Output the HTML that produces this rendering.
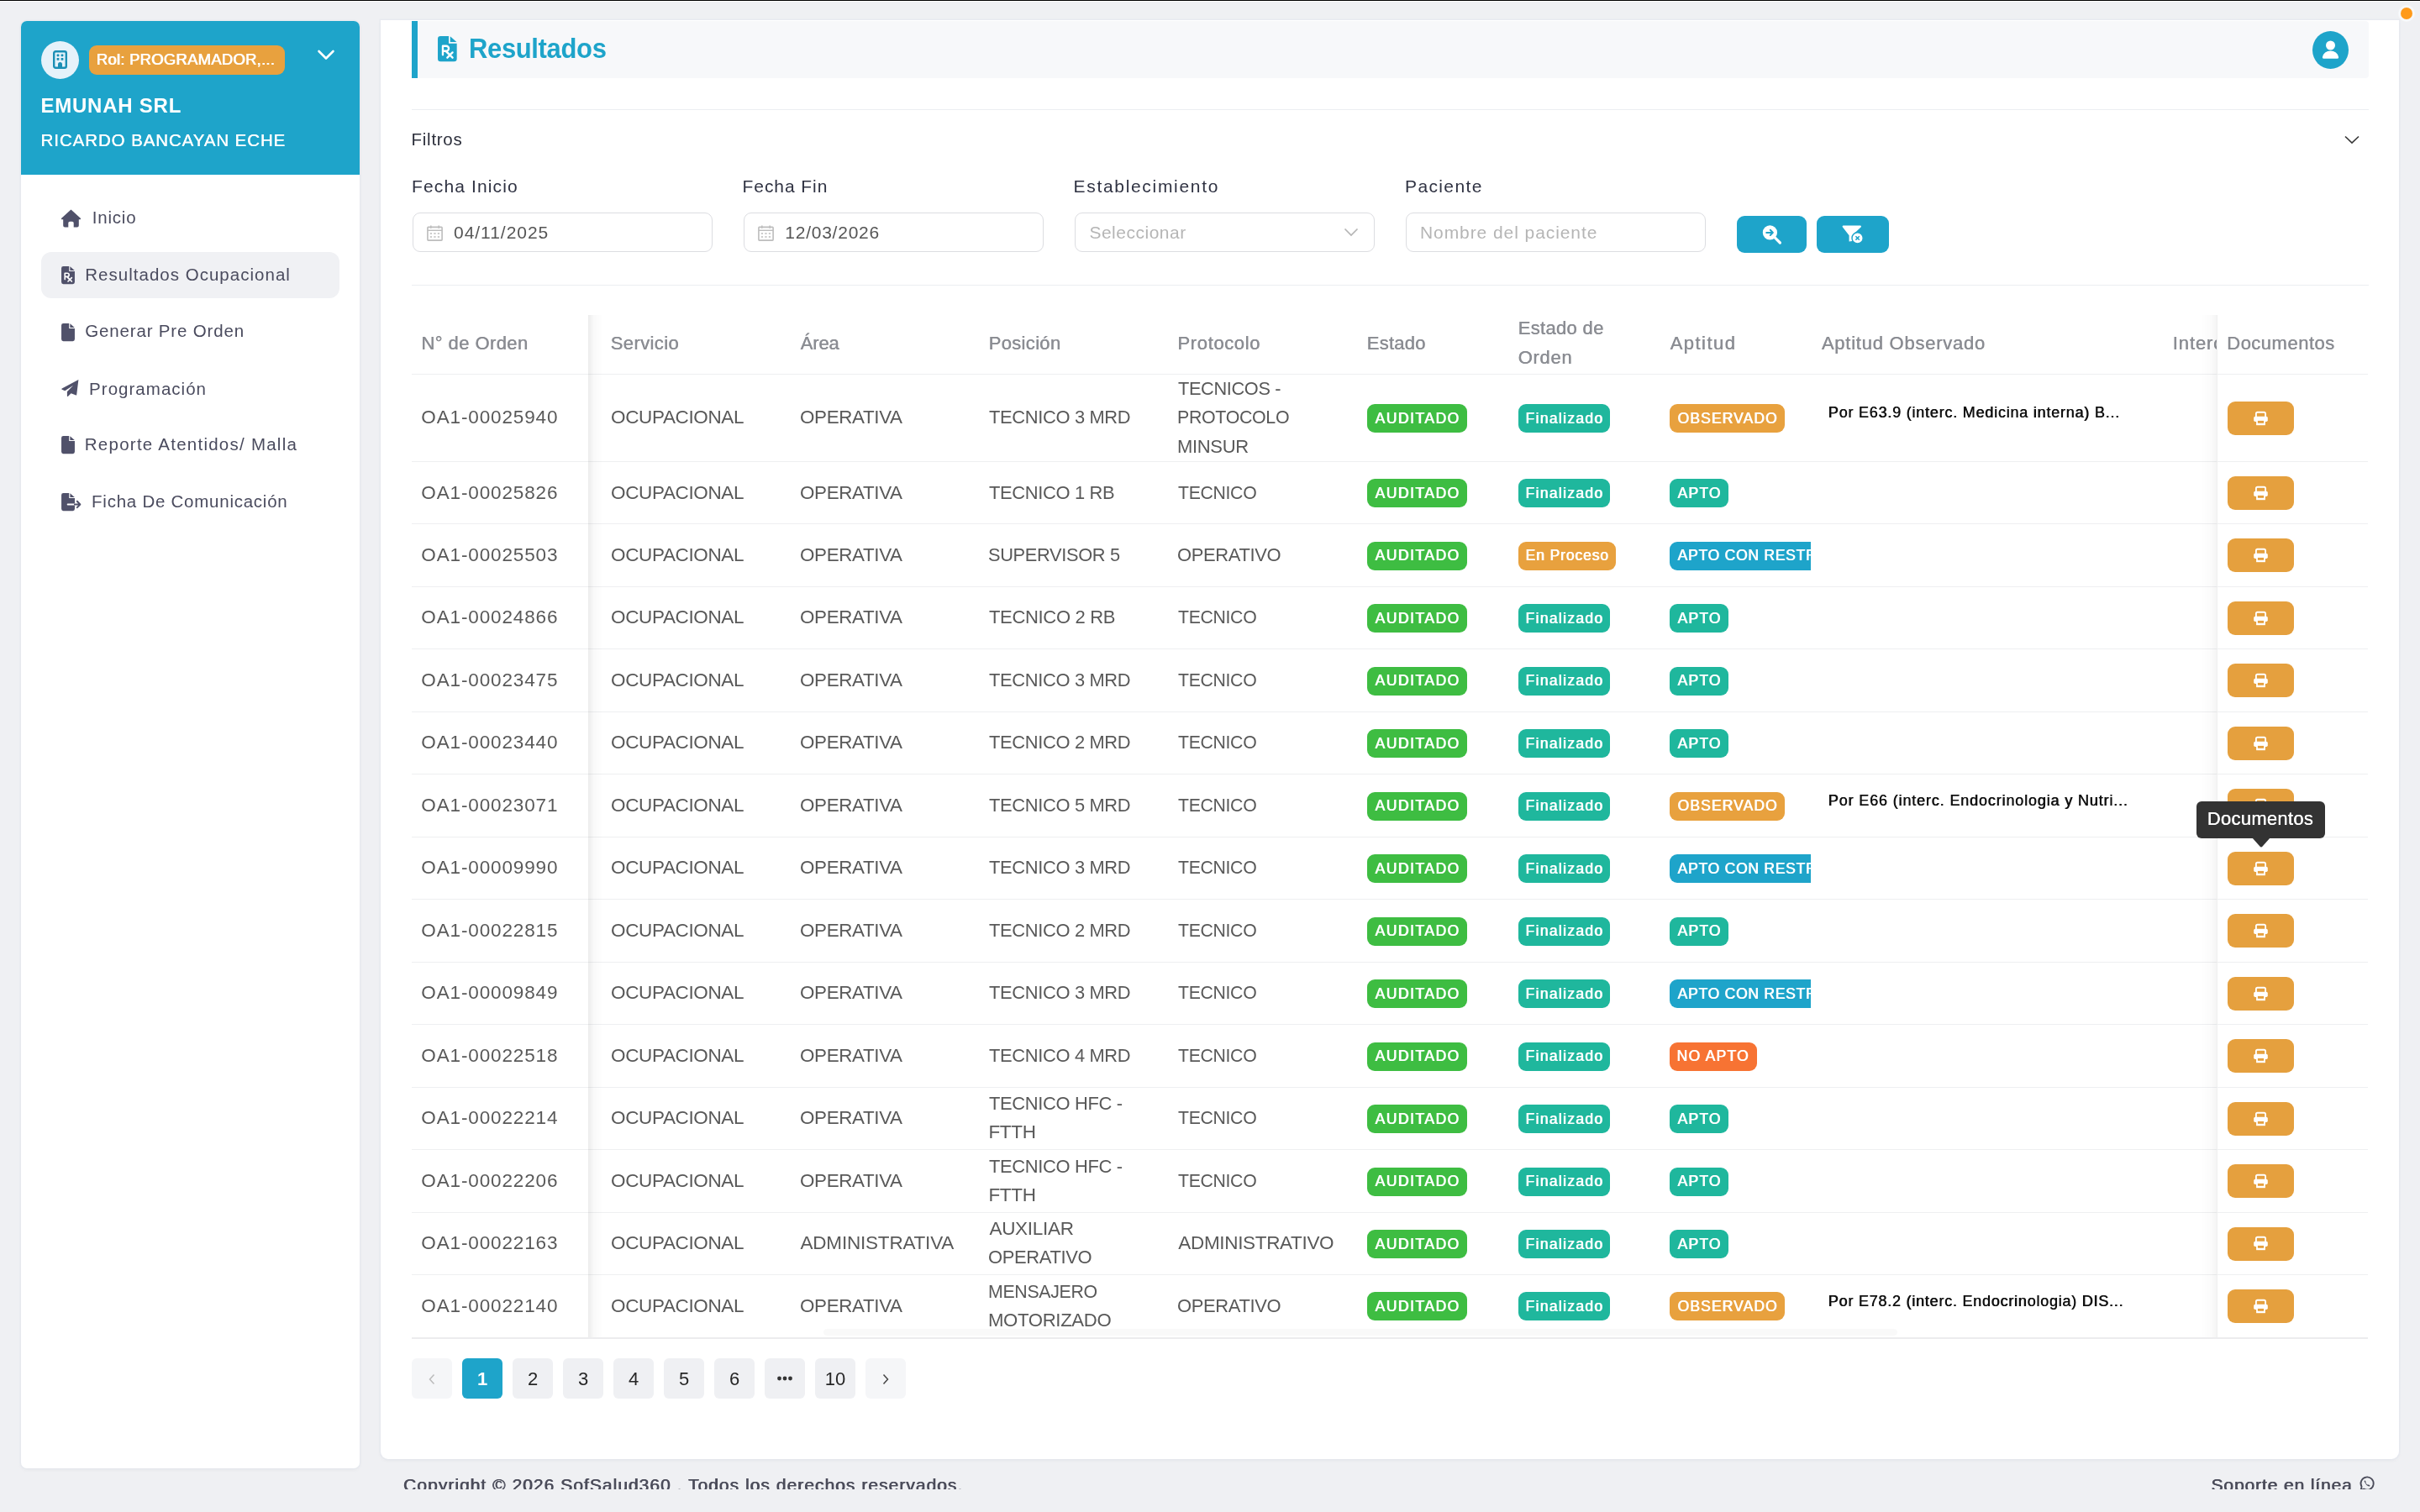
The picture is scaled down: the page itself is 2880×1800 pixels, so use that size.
<!DOCTYPE html><html><head><meta charset="utf-8"><style>
html,body{margin:0;padding:0;width:2880px;height:1800px;overflow:hidden;background:#eff0f3;font-family:"Liberation Sans", sans-serif;}
.t{position:absolute;white-space:nowrap;}
.r{position:absolute;}
svg{position:absolute;overflow:visible;}

</style></head><body><div style="position:absolute;left:0;top:0;width:2880px;height:1800px;overflow:hidden;will-change:transform">
<div class="r" style="left:0px;top:0px;width:2880px;height:1px;background:#000;"></div>
<div class="r" style="left:0px;top:1px;width:2880px;height:1px;background:#fbfbfb;"></div>
<div class="r" style="left:25px;top:25px;width:403px;height:1723px;background:#fff;border-radius:7px;box-shadow:0 0 0 1.5px rgba(225,230,236,0.55),0 2px 5px rgba(30,40,60,0.04);"></div>
<div class="r" style="left:25px;top:25px;width:403px;height:183px;background:#1ea4ca;border-radius:7px 7px 0 0;"></div>
<div class="r" style="left:49px;top:49px;width:45px;height:45px;background:#e5f2fa;border-radius:50%;"></div>
<svg style="left:63px;top:60px" width="17" height="22" viewBox="0 0 17 22"><rect x="1.2" y="1.2" width="14.6" height="19.6" rx="2" fill="none" stroke="#1b8fb5" stroke-width="2.4"/><rect x="4.6" y="4.4" width="2.8" height="2.8" rx="0.6" fill="#1b8fb5"/><rect x="9.6" y="4.4" width="2.8" height="2.8" rx="0.6" fill="#1b8fb5"/><rect x="4.6" y="9" width="2.8" height="2.8" rx="0.6" fill="#1b8fb5"/><rect x="9.6" y="9" width="2.8" height="2.8" rx="0.6" fill="#1b8fb5"/><path d="M6 21 V16.6 a2.5 2.5 0 0 1 5 0 V21 Z" fill="#1b8fb5"/></svg>
<div class="r" style="left:106px;top:54px;width:233px;height:35px;background:#e8a13e;border-radius:9px;"></div>
<div class="t" style="left:114.50px;top:61.57px;font-size:18.5px;line-height:18.5px;color:#fff;text-shadow:0.8px 0 0 #fff;letter-spacing:0.232px;">Rol: PROGRAMADOR,...</div>
<svg style="left:376px;top:57px" width="24" height="18" viewBox="0 0 24 18"><path d="M3.5 4 L12 12.5 L20.5 4" fill="none" stroke="#fff" stroke-width="2.6" stroke-linecap="round" stroke-linejoin="round"/></svg>
<div class="t" style="left:48.50px;top:113.80px;font-size:24px;line-height:24px;color:#fff;font-weight:700;letter-spacing:0.763px;">EMUNAH SRL</div>
<div class="t" style="left:48.50px;top:157.07px;font-size:20.5px;line-height:20.5px;color:#fff;text-shadow:0.35px 0 0 #fff;letter-spacing:0.903px;">RICARDO BANCAYAN ECHE</div>
<div class="r" style="left:49px;top:300px;width:355px;height:55px;background:#f0f1f4;border-radius:12px;"></div>
<svg style="left:72px;top:249px" width="25" height="22" viewBox="0 0 25 22"><path d="M12.5 0.6 L23.8 10.7 a0.9 0.9 0 0 1 -0.6 1.5 H21.8 V19.5 a2 2 0 0 1 -2 2 H15.7 V16.6 a1.8 1.8 0 0 0 -1.8 -1.8 H11.1 a1.8 1.8 0 0 0 -1.8 1.8 V21.5 H5.2 a2 2 0 0 1 -2 -2 V12.2 H1.8 a0.9 0.9 0 0 1 -0.6 -1.5 Z" fill="#50516a"/></svg>
<div class="t" style="left:109.70px;top:249.07px;font-size:20.5px;line-height:20.5px;color:#4a4b5e;letter-spacing:0.809px;">Inicio</div>
<svg style="left:73px;top:316.5px" width="16" height="21.2" viewBox="0 0 24 32"><path d="M0 3.5 A3.5 3.5 0 0 1 3.5 0 H13.8 V9.2 H24 V28.5 A3.5 3.5 0 0 1 20.5 32 H3.5 A3.5 3.5 0 0 1 0 28.5 Z" fill="#50516a"/><path d="M15.6 0.3 L23.7 7.4 H15.6 Z" fill="#50516a"/><path d="M6.3 23.5 V12.4 H10.6 A3.2 3.2 0 0 1 10.6 18.8 H6.3 M9.8 18.8 L13.6 22.4 M12 20.6 L18.6 27.2 M18.6 20.6 L12 27.2" fill="none" stroke="#fff" stroke-width="2.5" stroke-linecap="round" stroke-linejoin="round"/></svg>
<div class="t" style="left:101.30px;top:316.97px;font-size:20.5px;line-height:20.5px;color:#4a4b5e;letter-spacing:1.016px;">Resultados Ocupacional</div>
<svg style="left:73px;top:384.5px" width="16" height="21.2" viewBox="0 0 24 32"><path d="M0 3.5 A3.5 3.5 0 0 1 3.5 0 H13.8 V9.2 H24 V28.5 A3.5 3.5 0 0 1 20.5 32 H3.5 A3.5 3.5 0 0 1 0 28.5 Z" fill="#50516a"/><path d="M15.6 0.3 L23.7 7.4 H15.6 Z" fill="#50516a"/></svg>
<div class="t" style="left:101.30px;top:384.18px;font-size:20.5px;line-height:20.5px;color:#4a4b5e;letter-spacing:0.833px;">Generar Pre Orden</div>
<svg style="left:73px;top:451px" width="22" height="22" viewBox="0 0 22 22"><path d="M20.4 1.1 L0.7 11.6 a0.6 0.6 0 0 0 0 1.1 L4.3 14.3 L14.2 7.7 L6.9 15.2 V20.6 a0.5 0.5 0 0 0 0.9 0.3 L11.6 17.2 L17.4 19.4 a0.6 0.6 0 0 0 0.8 -0.5 Z" fill="#50516a"/></svg>
<div class="t" style="left:106.10px;top:452.77px;font-size:20.5px;line-height:20.5px;color:#4a4b5e;letter-spacing:1.026px;">Programación</div>
<svg style="left:73px;top:519.4px" width="16" height="21.2" viewBox="0 0 24 32"><path d="M0 3.5 A3.5 3.5 0 0 1 3.5 0 H13.8 V9.2 H24 V28.5 A3.5 3.5 0 0 1 20.5 32 H3.5 A3.5 3.5 0 0 1 0 28.5 Z" fill="#50516a"/><path d="M15.6 0.3 L23.7 7.4 H15.6 Z" fill="#50516a"/></svg>
<div class="t" style="left:100.80px;top:519.18px;font-size:20.5px;line-height:20.5px;color:#4a4b5e;letter-spacing:1.249px;">Reporte Atentidos/ Malla</div>
<svg style="left:73px;top:586.5px" width="24" height="21.2" viewBox="0 0 36 32"><path d="M0 3.5 A3.5 3.5 0 0 1 3.5 0 H13.8 V9.2 H24 V18.8 H11.5 A1.5 1.5 0 0 0 11.5 21.8 H24 V28.5 A3.5 3.5 0 0 1 20.5 32 H3.5 A3.5 3.5 0 0 1 0 28.5 Z" fill="#50516a"/><path d="M15.6 0.3 L23.7 7.4 H15.6 Z" fill="#50516a"/><path d="M24 20.3 H33 M28.3 14.8 L33.6 20.3 L28.3 25.8" fill="none" stroke="#50516a" stroke-width="3" stroke-linecap="round" stroke-linejoin="round"/></svg>
<div class="t" style="left:109.10px;top:586.68px;font-size:20.5px;line-height:20.5px;color:#4a4b5e;letter-spacing:0.749px;">Ficha De Comunicación</div>
<div class="r" style="left:453px;top:24px;width:2402px;height:1713px;background:#fff;border-radius:0 0 9px 9px;box-shadow:0 0 0 1.5px rgba(225,230,236,0.55),0 2px 5px rgba(30,40,60,0.04);"></div>
<div class="r" style="left:497px;top:25px;width:2322px;height:68px;background:#f7f8fa;border-radius:0 4px 4px 0;"></div>
<div class="r" style="left:490px;top:25px;width:7px;height:68px;background:#1ea4ca;"></div>
<svg style="left:521px;top:42.8px" width="22.7" height="30.2" viewBox="0 0 24 32"><path d="M0 3.5 A3.5 3.5 0 0 1 3.5 0 H13.8 V9.2 H24 V28.5 A3.5 3.5 0 0 1 20.5 32 H3.5 A3.5 3.5 0 0 1 0 28.5 Z" fill="#1ea4ca"/><path d="M15.6 0.3 L23.7 7.4 H15.6 Z" fill="#1ea4ca"/><path d="M6.3 23.5 V12.4 H10.6 A3.2 3.2 0 0 1 10.6 18.8 H6.3 M9.8 18.8 L13.6 22.4 M12 20.6 L18.6 27.2 M18.6 20.6 L12 27.2" fill="none" stroke="#fff" stroke-width="2.5" stroke-linecap="round" stroke-linejoin="round"/></svg>
<div class="t" style="left:558.12px;top:41.35px;font-size:33px;line-height:33px;color:#1ea4ca;font-weight:700;letter-spacing:-0.350px;transform:scaleX(0.9377);transform-origin:0 0;">Resultados</div>
<div class="r" style="left:2752px;top:37px;width:43px;height:45px;background:#1ea4ca;border-radius:50%;"></div>
<svg style="left:2761.5px;top:46px" width="25" height="25" viewBox="0 0 25 25"><circle cx="11.5" cy="8" r="5.5" fill="#fff"/><path d="M3.2 23.8 a1.4 1.4 0 0 1 -1.3 -1.7 A9.7 9 0 0 1 21.1 22.1 a1.4 1.4 0 0 1 -1.3 1.7 Z" fill="#fff"/></svg>
<div class="r" style="left:2857px;top:9px;width:14px;height:14px;background:#ff9a1a;border-radius:50%;box-shadow:0 0 0 3px rgba(255,255,255,0.5);"></div>
<div class="r" style="left:490px;top:130px;width:2329px;height:1px;background:#eceef1;"></div>
<div class="t" style="left:489.60px;top:155.77px;font-size:20.5px;line-height:20.5px;color:#2b2e3a;letter-spacing:0.724px;">Filtros</div>
<svg style="left:2788px;top:158px" width="22" height="16" viewBox="0 0 22 16"><path d="M3 4.5 L11 12 L19 4.5" fill="none" stroke="#3a3a3a" stroke-width="1.7"/></svg>
<div class="t" style="left:490.00px;top:211.15px;font-size:21px;line-height:21px;color:#2f3242;letter-spacing:1.132px;">Fecha Inicio</div>
<div class="r" style="left:491px;top:253px;width:357px;height:47px;background:#fff;border:1.5px solid #dcdde1;border-radius:9px;box-sizing:border-box;"></div>
<svg style="left:508px;top:268px" width="19" height="19" viewBox="0 0 19 19"><rect x="0.9" y="2.4" width="17.2" height="15.7" rx="0.8" fill="none" stroke="#bdbdbd" stroke-width="1.6"/><path d="M0.9 6.3 H18.1" stroke="#bdbdbd" stroke-width="1.4"/><path d="M4.8 0.4 V3.8 M14.2 0.4 V3.8" stroke="#bdbdbd" stroke-width="1.6"/><path d="M3.8 10 h2.3 M8.3 10 h2.3 M12.8 10 h2.3 M3.8 14 h2.3 M8.3 14 h2.3 M12.8 14 h2.3" stroke="#bdbdbd" stroke-width="1.6"/></svg>
<div class="t" style="left:540.00px;top:266.15px;font-size:21px;line-height:21px;color:#555;letter-spacing:0.971px;">04/11/2025</div>
<div class="t" style="left:883.50px;top:211.15px;font-size:21px;line-height:21px;color:#2f3242;letter-spacing:0.938px;">Fecha Fin</div>
<div class="r" style="left:884.5px;top:253px;width:357px;height:47px;background:#fff;border:1.5px solid #dcdde1;border-radius:9px;box-sizing:border-box;"></div>
<svg style="left:901.5px;top:268px" width="19" height="19" viewBox="0 0 19 19"><rect x="0.9" y="2.4" width="17.2" height="15.7" rx="0.8" fill="none" stroke="#bdbdbd" stroke-width="1.6"/><path d="M0.9 6.3 H18.1" stroke="#bdbdbd" stroke-width="1.4"/><path d="M4.8 0.4 V3.8 M14.2 0.4 V3.8" stroke="#bdbdbd" stroke-width="1.6"/><path d="M3.8 10 h2.3 M8.3 10 h2.3 M12.8 10 h2.3 M3.8 14 h2.3 M8.3 14 h2.3 M12.8 14 h2.3" stroke="#bdbdbd" stroke-width="1.6"/></svg>
<div class="t" style="left:934.30px;top:266.15px;font-size:21px;line-height:21px;color:#555;letter-spacing:0.753px;">12/03/2026</div>
<div class="t" style="left:1277.50px;top:211.15px;font-size:21px;line-height:21px;color:#2f3242;letter-spacing:1.688px;">Establecimiento</div>
<div class="r" style="left:1278.5px;top:253px;width:357px;height:47px;background:#fff;border:1.5px solid #dcdde1;border-radius:9px;box-sizing:border-box;"></div>
<div class="t" style="left:1296.40px;top:266.15px;font-size:21px;line-height:21px;color:#b5b5b5;letter-spacing:0.507px;">Seleccionar</div>
<svg style="left:1596.5px;top:268px" width="22" height="16" viewBox="0 0 22 16"><path d="M3.5 4.5 L11 12 L18.5 4.5" fill="none" stroke="#b5b5b5" stroke-width="1.7"/></svg>
<div class="t" style="left:1672.00px;top:211.15px;font-size:21px;line-height:21px;color:#2f3242;letter-spacing:1.379px;">Paciente</div>
<div class="r" style="left:1673px;top:253px;width:357px;height:47px;background:#fff;border:1.5px solid #dcdde1;border-radius:9px;box-sizing:border-box;"></div>
<div class="t" style="left:1690.00px;top:266.15px;font-size:21px;line-height:21px;color:#b5b5b5;letter-spacing:0.922px;">Nombre del paciente</div>
<div class="r" style="left:2067px;top:257px;width:83px;height:44px;background:#1ea4ca;border-radius:9px;"></div>
<svg style="left:2094px;top:266px" width="28" height="26" viewBox="0 0 28 26"><circle cx="12.4" cy="10.9" r="8.6" fill="#fff"/><path d="M18 16.6 L24.4 23" stroke="#fff" stroke-width="3.2" stroke-linecap="round"/><path d="M8.2 10.9 H15.8 M12.8 7.8 L15.9 10.9 L12.8 14" fill="none" stroke="#1ea4ca" stroke-width="2" stroke-linecap="round" stroke-linejoin="round"/></svg>
<div class="r" style="left:2162px;top:257px;width:86px;height:44px;background:#1ea4ca;border-radius:9px;"></div>
<svg style="left:2190px;top:266px" width="30" height="26" viewBox="0 0 30 26"><path d="M3.6 2.6 H24 a1 1 0 0 1 0.8 1.6 L14.2 14.2 V21 L10.6 21.6 V14.2 L2.8 4.2 A1 1 0 0 1 3.6 2.6 Z" fill="#fff"/><circle cx="20.6" cy="17.4" r="6.6" fill="#fff" stroke="#1ea4ca" stroke-width="1.4"/><path d="M18.4 15.2 L22.8 19.6 M22.8 15.2 L18.4 19.6" stroke="#1ea4ca" stroke-width="1.5"/></svg>
<div class="r" style="left:490px;top:339px;width:2329px;height:1px;background:#eceef1;"></div>
<div class="t" style="left:501.30px;top:397.80px;font-size:22px;line-height:22px;color:#8b8d93;text-shadow:0.5px 0 0 #8b8d93;letter-spacing:0.411px;">N° de Orden</div>
<div class="t" style="left:726.50px;top:397.80px;font-size:22px;line-height:22px;color:#8b8d93;text-shadow:0.5px 0 0 #8b8d93;letter-spacing:0.398px;">Servicio</div>
<div class="t" style="left:952.50px;top:397.80px;font-size:22px;line-height:22px;color:#8b8d93;text-shadow:0.5px 0 0 #8b8d93;letter-spacing:-0.178px;">Área</div>
<div class="t" style="left:1176.40px;top:397.80px;font-size:22px;line-height:22px;color:#8b8d93;text-shadow:0.5px 0 0 #8b8d93;letter-spacing:0.340px;">Posición</div>
<div class="t" style="left:1401.30px;top:397.80px;font-size:22px;line-height:22px;color:#8b8d93;text-shadow:0.5px 0 0 #8b8d93;letter-spacing:0.624px;">Protocolo</div>
<div class="t" style="left:1626.50px;top:397.80px;font-size:22px;line-height:22px;color:#8b8d93;text-shadow:0.5px 0 0 #8b8d93;letter-spacing:0.249px;">Estado</div>
<div class="t" style="left:1806.40px;top:380.00px;font-size:22px;line-height:22px;color:#8b8d93;text-shadow:0.5px 0 0 #8b8d93;letter-spacing:0.333px;">Estado de</div>
<div class="t" style="left:1806.40px;top:415.10px;font-size:22px;line-height:22px;color:#8b8d93;text-shadow:0.5px 0 0 #8b8d93;letter-spacing:0.748px;">Orden</div>
<div class="t" style="left:1987.40px;top:397.80px;font-size:22px;line-height:22px;color:#8b8d93;text-shadow:0.5px 0 0 #8b8d93;letter-spacing:1.474px;">Aptitud</div>
<div class="t" style="left:2167.70px;top:397.80px;font-size:22px;line-height:22px;color:#8b8d93;text-shadow:0.5px 0 0 #8b8d93;letter-spacing:0.751px;">Aptitud Observado</div>
<div class="r" style="left:2560px;top:380px;width:78px;height:50px;overflow:hidden">
<div class="t" style="left:25.50px;top:17.80px;font-size:22px;line-height:22px;color:#8b8d93;text-shadow:0.5px 0 0 #8b8d93;letter-spacing:0.900px;">Interconsulta</div>
</div>
<div class="r" style="left:490px;top:445px;width:2328px;height:1px;background:#eeeff1;"></div>
<div class="r" style="left:490px;top:549px;width:2328px;height:1px;background:#eeeff1;"></div>
<div class="r" style="left:490px;top:623px;width:2328px;height:1px;background:#eeeff1;"></div>
<div class="r" style="left:490px;top:698px;width:2328px;height:1px;background:#eeeff1;"></div>
<div class="r" style="left:490px;top:772px;width:2328px;height:1px;background:#eeeff1;"></div>
<div class="r" style="left:490px;top:847px;width:2328px;height:1px;background:#eeeff1;"></div>
<div class="r" style="left:490px;top:921px;width:2328px;height:1px;background:#eeeff1;"></div>
<div class="r" style="left:490px;top:996px;width:2328px;height:1px;background:#eeeff1;"></div>
<div class="r" style="left:490px;top:1070px;width:2328px;height:1px;background:#eeeff1;"></div>
<div class="r" style="left:490px;top:1145px;width:2328px;height:1px;background:#eeeff1;"></div>
<div class="r" style="left:490px;top:1219px;width:2328px;height:1px;background:#eeeff1;"></div>
<div class="r" style="left:490px;top:1294px;width:2328px;height:1px;background:#eeeff1;"></div>
<div class="r" style="left:490px;top:1368px;width:2328px;height:1px;background:#eeeff1;"></div>
<div class="r" style="left:490px;top:1443px;width:2328px;height:1px;background:#eeeff1;"></div>
<div class="r" style="left:490px;top:1517px;width:2328px;height:1px;background:#eeeff1;"></div>
<div class="r" style="left:490px;top:1592px;width:2328px;height:2px;background:#ececee;"></div>
<div class="t" style="left:501.30px;top:486.27px;font-size:22.5px;line-height:22.5px;color:#595959;letter-spacing:0.872px;">OA1-00025940</div>
<div class="t" style="left:726.50px;top:486.27px;font-size:22.5px;line-height:22.5px;color:#595959;letter-spacing:-0.350px;transform:scaleX(0.9994);transform-origin:0 0;">OCUPACIONAL</div>
<div class="t" style="left:951.51px;top:486.27px;font-size:22.5px;line-height:22.5px;color:#595959;letter-spacing:-0.350px;transform:scaleX(0.9948);transform-origin:0 0;">OPERATIVA</div>
<div class="t" style="left:1177.40px;top:486.27px;font-size:22.5px;line-height:22.5px;color:#595959;letter-spacing:-0.350px;transform:scaleX(0.9731);transform-origin:0 0;">TECNICO 3 MRD</div>
<div class="t" style="left:1402.30px;top:451.97px;font-size:22.5px;line-height:22.5px;color:#595959;letter-spacing:-0.350px;transform:scaleX(0.9655);transform-origin:0 0;">TECNICOS -</div>
<div class="t" style="left:1401.35px;top:486.27px;font-size:22.5px;line-height:22.5px;color:#595959;letter-spacing:-0.350px;transform:scaleX(0.9500);transform-origin:0 0;">PROTOCOLO</div>
<div class="t" style="left:1401.32px;top:520.57px;font-size:22.5px;line-height:22.5px;color:#595959;letter-spacing:-0.350px;transform:scaleX(0.9784);transform-origin:0 0;">MINSUR</div>
<div class="r" style="left:1627px;top:481.00px;width:119px;height:34px;background:#3ebd42;border-radius:9px"></div>
<div class="t" style="left:1636.30px;top:489.62px;font-size:17.5px;line-height:17.5px;color:#fff;text-shadow:0.8px 0 0 #fff;letter-spacing:1.498px;">AUDITADO</div>
<div class="r" style="left:1807px;top:481.00px;width:109px;height:34px;background:#1fb79d;border-radius:9px"></div>
<div class="t" style="left:1815.30px;top:489.62px;font-size:17.5px;line-height:17.5px;color:#fff;text-shadow:0.8px 0 0 #fff;letter-spacing:1.307px;">Finalizado</div>
<div class="r" style="left:1987px;top:481.00px;width:137px;height:34px;background:#e8a13e;border-radius:9px"></div>
<div class="t" style="left:1996.30px;top:489.62px;font-size:17.5px;line-height:17.5px;color:#fff;text-shadow:0.8px 0 0 #fff;letter-spacing:1.108px;">OBSERVADO</div>
<div class="t" style="left:2175.60px;top:481.60px;font-size:18px;line-height:18px;color:#111111;text-shadow:0.6px 0 0 #111111;letter-spacing:0.782px;">Por E63.9 (interc. Medicina interna) B...</div>
<div class="r" style="left:2651px;top:477.50px;width:79px;height:40px;background:#e5a03e;border-radius:9px"></div>
<svg style="left:2682px;top:490px" width="17" height="17" viewBox="0 0 17 17"><path d="M2.9 6 V2.4 a1.6 1.6 0 0 1 1.6 -1.6 H12.5 a1.6 1.6 0 0 1 1.6 1.6 V6" fill="none" stroke="#fff" stroke-width="1.9"/><rect x="0.2" y="5.8" width="16.6" height="6.2" rx="1.8" fill="#fff"/><rect x="3.1" y="9.6" width="10.8" height="6.6" fill="#fff"/><rect x="4.9" y="10.9" width="7.2" height="2.9" fill="#e5a03e"/></svg>
<div class="t" style="left:501.30px;top:575.51px;font-size:22.5px;line-height:22.5px;color:#595959;letter-spacing:0.872px;">OA1-00025826</div>
<div class="t" style="left:726.50px;top:575.51px;font-size:22.5px;line-height:22.5px;color:#595959;letter-spacing:-0.350px;transform:scaleX(0.9994);transform-origin:0 0;">OCUPACIONAL</div>
<div class="t" style="left:951.51px;top:575.51px;font-size:22.5px;line-height:22.5px;color:#595959;letter-spacing:-0.350px;transform:scaleX(0.9948);transform-origin:0 0;">OPERATIVA</div>
<div class="t" style="left:1177.40px;top:575.51px;font-size:22.5px;line-height:22.5px;color:#595959;letter-spacing:-0.350px;transform:scaleX(0.9740);transform-origin:0 0;">TECNICO 1 RB</div>
<div class="t" style="left:1402.30px;top:575.51px;font-size:22.5px;line-height:22.5px;color:#595959;letter-spacing:-0.350px;transform:scaleX(0.9448);transform-origin:0 0;">TECNICO</div>
<div class="r" style="left:1627px;top:570.24px;width:119px;height:34px;background:#3ebd42;border-radius:9px"></div>
<div class="t" style="left:1636.30px;top:578.87px;font-size:17.5px;line-height:17.5px;color:#fff;text-shadow:0.8px 0 0 #fff;letter-spacing:1.498px;">AUDITADO</div>
<div class="r" style="left:1807px;top:570.24px;width:109px;height:34px;background:#1fb79d;border-radius:9px"></div>
<div class="t" style="left:1815.30px;top:578.87px;font-size:17.5px;line-height:17.5px;color:#fff;text-shadow:0.8px 0 0 #fff;letter-spacing:1.307px;">Finalizado</div>
<div class="r" style="left:1987px;top:570.24px;width:70px;height:34px;background:#1fb79d;border-radius:9px"></div>
<div class="t" style="left:1996.30px;top:578.87px;font-size:17.5px;line-height:17.5px;color:#fff;text-shadow:0.8px 0 0 #fff;letter-spacing:1.127px;">APTO</div>
<div class="r" style="left:2651px;top:566.74px;width:79px;height:40px;background:#e5a03e;border-radius:9px"></div>
<svg style="left:2682px;top:579px" width="17" height="17" viewBox="0 0 17 17"><path d="M2.9 6 V2.4 a1.6 1.6 0 0 1 1.6 -1.6 H12.5 a1.6 1.6 0 0 1 1.6 1.6 V6" fill="none" stroke="#fff" stroke-width="1.9"/><rect x="0.2" y="5.8" width="16.6" height="6.2" rx="1.8" fill="#fff"/><rect x="3.1" y="9.6" width="10.8" height="6.6" fill="#fff"/><rect x="4.9" y="10.9" width="7.2" height="2.9" fill="#e5a03e"/></svg>
<div class="t" style="left:501.30px;top:650.00px;font-size:22.5px;line-height:22.5px;color:#595959;letter-spacing:0.872px;">OA1-00025503</div>
<div class="t" style="left:726.50px;top:650.00px;font-size:22.5px;line-height:22.5px;color:#595959;letter-spacing:-0.350px;transform:scaleX(0.9994);transform-origin:0 0;">OCUPACIONAL</div>
<div class="t" style="left:951.51px;top:650.00px;font-size:22.5px;line-height:22.5px;color:#595959;letter-spacing:-0.350px;transform:scaleX(0.9948);transform-origin:0 0;">OPERATIVA</div>
<div class="t" style="left:1176.43px;top:650.00px;font-size:22.5px;line-height:22.5px;color:#595959;letter-spacing:-0.350px;transform:scaleX(0.9693);transform-origin:0 0;">SUPERVISOR 5</div>
<div class="t" style="left:1401.32px;top:650.00px;font-size:22.5px;line-height:22.5px;color:#595959;letter-spacing:-0.350px;transform:scaleX(0.9752);transform-origin:0 0;">OPERATIVO</div>
<div class="r" style="left:1627px;top:644.72px;width:119px;height:34px;background:#3ebd42;border-radius:9px"></div>
<div class="t" style="left:1636.30px;top:653.35px;font-size:17.5px;line-height:17.5px;color:#fff;text-shadow:0.8px 0 0 #fff;letter-spacing:1.498px;">AUDITADO</div>
<div class="r" style="left:1807px;top:644.72px;width:116px;height:34px;background:#e8a13e;border-radius:9px"></div>
<div class="t" style="left:1815.30px;top:653.35px;font-size:17.5px;line-height:17.5px;color:#fff;text-shadow:0.8px 0 0 #fff;letter-spacing:0.885px;">En Proceso</div>
<div class="r" style="left:1987px;top:644.72px;width:168px;height:34px;overflow:hidden;border-radius:9px 0 0 9px;background:#1ea4ca">
<div class="t" style="left:9.30px;top:8.62px;font-size:17.5px;line-height:17.5px;color:#fff;text-shadow:0.8px 0 0 #fff;letter-spacing:0.750px;">APTO CON RESTRICCIONES</div>
</div>
<div class="r" style="left:2651px;top:641.22px;width:79px;height:40px;background:#e5a03e;border-radius:9px"></div>
<svg style="left:2682px;top:653px" width="17" height="17" viewBox="0 0 17 17"><path d="M2.9 6 V2.4 a1.6 1.6 0 0 1 1.6 -1.6 H12.5 a1.6 1.6 0 0 1 1.6 1.6 V6" fill="none" stroke="#fff" stroke-width="1.9"/><rect x="0.2" y="5.8" width="16.6" height="6.2" rx="1.8" fill="#fff"/><rect x="3.1" y="9.6" width="10.8" height="6.6" fill="#fff"/><rect x="4.9" y="10.9" width="7.2" height="2.9" fill="#e5a03e"/></svg>
<div class="t" style="left:501.30px;top:724.48px;font-size:22.5px;line-height:22.5px;color:#595959;letter-spacing:0.872px;">OA1-00024866</div>
<div class="t" style="left:726.50px;top:724.48px;font-size:22.5px;line-height:22.5px;color:#595959;letter-spacing:-0.350px;transform:scaleX(0.9994);transform-origin:0 0;">OCUPACIONAL</div>
<div class="t" style="left:951.51px;top:724.48px;font-size:22.5px;line-height:22.5px;color:#595959;letter-spacing:-0.350px;transform:scaleX(0.9948);transform-origin:0 0;">OPERATIVA</div>
<div class="t" style="left:1177.40px;top:724.48px;font-size:22.5px;line-height:22.5px;color:#595959;letter-spacing:-0.350px;transform:scaleX(0.9786);transform-origin:0 0;">TECNICO 2 RB</div>
<div class="t" style="left:1402.30px;top:724.48px;font-size:22.5px;line-height:22.5px;color:#595959;letter-spacing:-0.350px;transform:scaleX(0.9448);transform-origin:0 0;">TECNICO</div>
<div class="r" style="left:1627px;top:719.20px;width:119px;height:34px;background:#3ebd42;border-radius:9px"></div>
<div class="t" style="left:1636.30px;top:727.83px;font-size:17.5px;line-height:17.5px;color:#fff;text-shadow:0.8px 0 0 #fff;letter-spacing:1.498px;">AUDITADO</div>
<div class="r" style="left:1807px;top:719.20px;width:109px;height:34px;background:#1fb79d;border-radius:9px"></div>
<div class="t" style="left:1815.30px;top:727.83px;font-size:17.5px;line-height:17.5px;color:#fff;text-shadow:0.8px 0 0 #fff;letter-spacing:1.307px;">Finalizado</div>
<div class="r" style="left:1987px;top:719.20px;width:70px;height:34px;background:#1fb79d;border-radius:9px"></div>
<div class="t" style="left:1996.30px;top:727.83px;font-size:17.5px;line-height:17.5px;color:#fff;text-shadow:0.8px 0 0 #fff;letter-spacing:1.127px;">APTO</div>
<div class="r" style="left:2651px;top:715.70px;width:79px;height:40px;background:#e5a03e;border-radius:9px"></div>
<svg style="left:2682px;top:728px" width="17" height="17" viewBox="0 0 17 17"><path d="M2.9 6 V2.4 a1.6 1.6 0 0 1 1.6 -1.6 H12.5 a1.6 1.6 0 0 1 1.6 1.6 V6" fill="none" stroke="#fff" stroke-width="1.9"/><rect x="0.2" y="5.8" width="16.6" height="6.2" rx="1.8" fill="#fff"/><rect x="3.1" y="9.6" width="10.8" height="6.6" fill="#fff"/><rect x="4.9" y="10.9" width="7.2" height="2.9" fill="#e5a03e"/></svg>
<div class="t" style="left:501.30px;top:798.96px;font-size:22.5px;line-height:22.5px;color:#595959;letter-spacing:0.872px;">OA1-00023475</div>
<div class="t" style="left:726.50px;top:798.96px;font-size:22.5px;line-height:22.5px;color:#595959;letter-spacing:-0.350px;transform:scaleX(0.9994);transform-origin:0 0;">OCUPACIONAL</div>
<div class="t" style="left:951.51px;top:798.96px;font-size:22.5px;line-height:22.5px;color:#595959;letter-spacing:-0.350px;transform:scaleX(0.9948);transform-origin:0 0;">OPERATIVA</div>
<div class="t" style="left:1177.40px;top:798.96px;font-size:22.5px;line-height:22.5px;color:#595959;letter-spacing:-0.350px;transform:scaleX(0.9731);transform-origin:0 0;">TECNICO 3 MRD</div>
<div class="t" style="left:1402.30px;top:798.96px;font-size:22.5px;line-height:22.5px;color:#595959;letter-spacing:-0.350px;transform:scaleX(0.9448);transform-origin:0 0;">TECNICO</div>
<div class="r" style="left:1627px;top:793.68px;width:119px;height:34px;background:#3ebd42;border-radius:9px"></div>
<div class="t" style="left:1636.30px;top:802.31px;font-size:17.5px;line-height:17.5px;color:#fff;text-shadow:0.8px 0 0 #fff;letter-spacing:1.498px;">AUDITADO</div>
<div class="r" style="left:1807px;top:793.68px;width:109px;height:34px;background:#1fb79d;border-radius:9px"></div>
<div class="t" style="left:1815.30px;top:802.31px;font-size:17.5px;line-height:17.5px;color:#fff;text-shadow:0.8px 0 0 #fff;letter-spacing:1.307px;">Finalizado</div>
<div class="r" style="left:1987px;top:793.68px;width:70px;height:34px;background:#1fb79d;border-radius:9px"></div>
<div class="t" style="left:1996.30px;top:802.31px;font-size:17.5px;line-height:17.5px;color:#fff;text-shadow:0.8px 0 0 #fff;letter-spacing:1.127px;">APTO</div>
<div class="r" style="left:2651px;top:790.18px;width:79px;height:40px;background:#e5a03e;border-radius:9px"></div>
<svg style="left:2682px;top:802px" width="17" height="17" viewBox="0 0 17 17"><path d="M2.9 6 V2.4 a1.6 1.6 0 0 1 1.6 -1.6 H12.5 a1.6 1.6 0 0 1 1.6 1.6 V6" fill="none" stroke="#fff" stroke-width="1.9"/><rect x="0.2" y="5.8" width="16.6" height="6.2" rx="1.8" fill="#fff"/><rect x="3.1" y="9.6" width="10.8" height="6.6" fill="#fff"/><rect x="4.9" y="10.9" width="7.2" height="2.9" fill="#e5a03e"/></svg>
<div class="t" style="left:501.30px;top:873.44px;font-size:22.5px;line-height:22.5px;color:#595959;letter-spacing:0.872px;">OA1-00023440</div>
<div class="t" style="left:726.50px;top:873.44px;font-size:22.5px;line-height:22.5px;color:#595959;letter-spacing:-0.350px;transform:scaleX(0.9994);transform-origin:0 0;">OCUPACIONAL</div>
<div class="t" style="left:951.51px;top:873.44px;font-size:22.5px;line-height:22.5px;color:#595959;letter-spacing:-0.350px;transform:scaleX(0.9948);transform-origin:0 0;">OPERATIVA</div>
<div class="t" style="left:1177.40px;top:873.44px;font-size:22.5px;line-height:22.5px;color:#595959;letter-spacing:-0.350px;transform:scaleX(0.9731);transform-origin:0 0;">TECNICO 2 MRD</div>
<div class="t" style="left:1402.30px;top:873.44px;font-size:22.5px;line-height:22.5px;color:#595959;letter-spacing:-0.350px;transform:scaleX(0.9448);transform-origin:0 0;">TECNICO</div>
<div class="r" style="left:1627px;top:868.16px;width:119px;height:34px;background:#3ebd42;border-radius:9px"></div>
<div class="t" style="left:1636.30px;top:876.79px;font-size:17.5px;line-height:17.5px;color:#fff;text-shadow:0.8px 0 0 #fff;letter-spacing:1.498px;">AUDITADO</div>
<div class="r" style="left:1807px;top:868.16px;width:109px;height:34px;background:#1fb79d;border-radius:9px"></div>
<div class="t" style="left:1815.30px;top:876.79px;font-size:17.5px;line-height:17.5px;color:#fff;text-shadow:0.8px 0 0 #fff;letter-spacing:1.307px;">Finalizado</div>
<div class="r" style="left:1987px;top:868.16px;width:70px;height:34px;background:#1fb79d;border-radius:9px"></div>
<div class="t" style="left:1996.30px;top:876.79px;font-size:17.5px;line-height:17.5px;color:#fff;text-shadow:0.8px 0 0 #fff;letter-spacing:1.127px;">APTO</div>
<div class="r" style="left:2651px;top:864.66px;width:79px;height:40px;background:#e5a03e;border-radius:9px"></div>
<svg style="left:2682px;top:877px" width="17" height="17" viewBox="0 0 17 17"><path d="M2.9 6 V2.4 a1.6 1.6 0 0 1 1.6 -1.6 H12.5 a1.6 1.6 0 0 1 1.6 1.6 V6" fill="none" stroke="#fff" stroke-width="1.9"/><rect x="0.2" y="5.8" width="16.6" height="6.2" rx="1.8" fill="#fff"/><rect x="3.1" y="9.6" width="10.8" height="6.6" fill="#fff"/><rect x="4.9" y="10.9" width="7.2" height="2.9" fill="#e5a03e"/></svg>
<div class="t" style="left:501.30px;top:947.92px;font-size:22.5px;line-height:22.5px;color:#595959;letter-spacing:0.872px;">OA1-00023071</div>
<div class="t" style="left:726.50px;top:947.92px;font-size:22.5px;line-height:22.5px;color:#595959;letter-spacing:-0.350px;transform:scaleX(0.9994);transform-origin:0 0;">OCUPACIONAL</div>
<div class="t" style="left:951.51px;top:947.92px;font-size:22.5px;line-height:22.5px;color:#595959;letter-spacing:-0.350px;transform:scaleX(0.9948);transform-origin:0 0;">OPERATIVA</div>
<div class="t" style="left:1177.40px;top:947.92px;font-size:22.5px;line-height:22.5px;color:#595959;letter-spacing:-0.350px;transform:scaleX(0.9731);transform-origin:0 0;">TECNICO 5 MRD</div>
<div class="t" style="left:1402.30px;top:947.92px;font-size:22.5px;line-height:22.5px;color:#595959;letter-spacing:-0.350px;transform:scaleX(0.9448);transform-origin:0 0;">TECNICO</div>
<div class="r" style="left:1627px;top:942.64px;width:119px;height:34px;background:#3ebd42;border-radius:9px"></div>
<div class="t" style="left:1636.30px;top:951.27px;font-size:17.5px;line-height:17.5px;color:#fff;text-shadow:0.8px 0 0 #fff;letter-spacing:1.498px;">AUDITADO</div>
<div class="r" style="left:1807px;top:942.64px;width:109px;height:34px;background:#1fb79d;border-radius:9px"></div>
<div class="t" style="left:1815.30px;top:951.27px;font-size:17.5px;line-height:17.5px;color:#fff;text-shadow:0.8px 0 0 #fff;letter-spacing:1.307px;">Finalizado</div>
<div class="r" style="left:1987px;top:942.64px;width:137px;height:34px;background:#e8a13e;border-radius:9px"></div>
<div class="t" style="left:1996.30px;top:951.27px;font-size:17.5px;line-height:17.5px;color:#fff;text-shadow:0.8px 0 0 #fff;letter-spacing:1.108px;">OBSERVADO</div>
<div class="t" style="left:2175.60px;top:943.84px;font-size:18px;line-height:18px;color:#111111;text-shadow:0.6px 0 0 #111111;letter-spacing:0.853px;">Por E66 (interc. Endocrinologia y Nutri...</div>
<div class="r" style="left:2651px;top:939.14px;width:79px;height:40px;background:#e5a03e;border-radius:9px"></div>
<svg style="left:2682px;top:951px" width="17" height="17" viewBox="0 0 17 17"><path d="M2.9 6 V2.4 a1.6 1.6 0 0 1 1.6 -1.6 H12.5 a1.6 1.6 0 0 1 1.6 1.6 V6" fill="none" stroke="#fff" stroke-width="1.9"/><rect x="0.2" y="5.8" width="16.6" height="6.2" rx="1.8" fill="#fff"/><rect x="3.1" y="9.6" width="10.8" height="6.6" fill="#fff"/><rect x="4.9" y="10.9" width="7.2" height="2.9" fill="#e5a03e"/></svg>
<div class="t" style="left:501.30px;top:1022.40px;font-size:22.5px;line-height:22.5px;color:#595959;letter-spacing:0.872px;">OA1-00009990</div>
<div class="t" style="left:726.50px;top:1022.40px;font-size:22.5px;line-height:22.5px;color:#595959;letter-spacing:-0.350px;transform:scaleX(0.9994);transform-origin:0 0;">OCUPACIONAL</div>
<div class="t" style="left:951.51px;top:1022.40px;font-size:22.5px;line-height:22.5px;color:#595959;letter-spacing:-0.350px;transform:scaleX(0.9948);transform-origin:0 0;">OPERATIVA</div>
<div class="t" style="left:1177.40px;top:1022.40px;font-size:22.5px;line-height:22.5px;color:#595959;letter-spacing:-0.350px;transform:scaleX(0.9731);transform-origin:0 0;">TECNICO 3 MRD</div>
<div class="t" style="left:1402.30px;top:1022.40px;font-size:22.5px;line-height:22.5px;color:#595959;letter-spacing:-0.350px;transform:scaleX(0.9448);transform-origin:0 0;">TECNICO</div>
<div class="r" style="left:1627px;top:1017.12px;width:119px;height:34px;background:#3ebd42;border-radius:9px"></div>
<div class="t" style="left:1636.30px;top:1025.75px;font-size:17.5px;line-height:17.5px;color:#fff;text-shadow:0.8px 0 0 #fff;letter-spacing:1.498px;">AUDITADO</div>
<div class="r" style="left:1807px;top:1017.12px;width:109px;height:34px;background:#1fb79d;border-radius:9px"></div>
<div class="t" style="left:1815.30px;top:1025.75px;font-size:17.5px;line-height:17.5px;color:#fff;text-shadow:0.8px 0 0 #fff;letter-spacing:1.307px;">Finalizado</div>
<div class="r" style="left:1987px;top:1017.12px;width:168px;height:34px;overflow:hidden;border-radius:9px 0 0 9px;background:#1ea4ca">
<div class="t" style="left:9.30px;top:8.62px;font-size:17.5px;line-height:17.5px;color:#fff;text-shadow:0.8px 0 0 #fff;letter-spacing:0.750px;">APTO CON RESTRICCIONES</div>
</div>
<div class="r" style="left:2651px;top:1013.62px;width:79px;height:40px;background:#e5a03e;border-radius:9px"></div>
<svg style="left:2682px;top:1026px" width="17" height="17" viewBox="0 0 17 17"><path d="M2.9 6 V2.4 a1.6 1.6 0 0 1 1.6 -1.6 H12.5 a1.6 1.6 0 0 1 1.6 1.6 V6" fill="none" stroke="#fff" stroke-width="1.9"/><rect x="0.2" y="5.8" width="16.6" height="6.2" rx="1.8" fill="#fff"/><rect x="3.1" y="9.6" width="10.8" height="6.6" fill="#fff"/><rect x="4.9" y="10.9" width="7.2" height="2.9" fill="#e5a03e"/></svg>
<div class="t" style="left:501.30px;top:1096.88px;font-size:22.5px;line-height:22.5px;color:#595959;letter-spacing:0.872px;">OA1-00022815</div>
<div class="t" style="left:726.50px;top:1096.88px;font-size:22.5px;line-height:22.5px;color:#595959;letter-spacing:-0.350px;transform:scaleX(0.9994);transform-origin:0 0;">OCUPACIONAL</div>
<div class="t" style="left:951.51px;top:1096.88px;font-size:22.5px;line-height:22.5px;color:#595959;letter-spacing:-0.350px;transform:scaleX(0.9948);transform-origin:0 0;">OPERATIVA</div>
<div class="t" style="left:1177.40px;top:1096.88px;font-size:22.5px;line-height:22.5px;color:#595959;letter-spacing:-0.350px;transform:scaleX(0.9731);transform-origin:0 0;">TECNICO 2 MRD</div>
<div class="t" style="left:1402.30px;top:1096.88px;font-size:22.5px;line-height:22.5px;color:#595959;letter-spacing:-0.350px;transform:scaleX(0.9448);transform-origin:0 0;">TECNICO</div>
<div class="r" style="left:1627px;top:1091.60px;width:119px;height:34px;background:#3ebd42;border-radius:9px"></div>
<div class="t" style="left:1636.30px;top:1100.23px;font-size:17.5px;line-height:17.5px;color:#fff;text-shadow:0.8px 0 0 #fff;letter-spacing:1.498px;">AUDITADO</div>
<div class="r" style="left:1807px;top:1091.60px;width:109px;height:34px;background:#1fb79d;border-radius:9px"></div>
<div class="t" style="left:1815.30px;top:1100.23px;font-size:17.5px;line-height:17.5px;color:#fff;text-shadow:0.8px 0 0 #fff;letter-spacing:1.307px;">Finalizado</div>
<div class="r" style="left:1987px;top:1091.60px;width:70px;height:34px;background:#1fb79d;border-radius:9px"></div>
<div class="t" style="left:1996.30px;top:1100.23px;font-size:17.5px;line-height:17.5px;color:#fff;text-shadow:0.8px 0 0 #fff;letter-spacing:1.127px;">APTO</div>
<div class="r" style="left:2651px;top:1088.10px;width:79px;height:40px;background:#e5a03e;border-radius:9px"></div>
<svg style="left:2682px;top:1100px" width="17" height="17" viewBox="0 0 17 17"><path d="M2.9 6 V2.4 a1.6 1.6 0 0 1 1.6 -1.6 H12.5 a1.6 1.6 0 0 1 1.6 1.6 V6" fill="none" stroke="#fff" stroke-width="1.9"/><rect x="0.2" y="5.8" width="16.6" height="6.2" rx="1.8" fill="#fff"/><rect x="3.1" y="9.6" width="10.8" height="6.6" fill="#fff"/><rect x="4.9" y="10.9" width="7.2" height="2.9" fill="#e5a03e"/></svg>
<div class="t" style="left:501.30px;top:1171.36px;font-size:22.5px;line-height:22.5px;color:#595959;letter-spacing:0.872px;">OA1-00009849</div>
<div class="t" style="left:726.50px;top:1171.36px;font-size:22.5px;line-height:22.5px;color:#595959;letter-spacing:-0.350px;transform:scaleX(0.9994);transform-origin:0 0;">OCUPACIONAL</div>
<div class="t" style="left:951.51px;top:1171.36px;font-size:22.5px;line-height:22.5px;color:#595959;letter-spacing:-0.350px;transform:scaleX(0.9948);transform-origin:0 0;">OPERATIVA</div>
<div class="t" style="left:1177.40px;top:1171.36px;font-size:22.5px;line-height:22.5px;color:#595959;letter-spacing:-0.350px;transform:scaleX(0.9731);transform-origin:0 0;">TECNICO 3 MRD</div>
<div class="t" style="left:1402.30px;top:1171.36px;font-size:22.5px;line-height:22.5px;color:#595959;letter-spacing:-0.350px;transform:scaleX(0.9448);transform-origin:0 0;">TECNICO</div>
<div class="r" style="left:1627px;top:1166.08px;width:119px;height:34px;background:#3ebd42;border-radius:9px"></div>
<div class="t" style="left:1636.30px;top:1174.71px;font-size:17.5px;line-height:17.5px;color:#fff;text-shadow:0.8px 0 0 #fff;letter-spacing:1.498px;">AUDITADO</div>
<div class="r" style="left:1807px;top:1166.08px;width:109px;height:34px;background:#1fb79d;border-radius:9px"></div>
<div class="t" style="left:1815.30px;top:1174.71px;font-size:17.5px;line-height:17.5px;color:#fff;text-shadow:0.8px 0 0 #fff;letter-spacing:1.307px;">Finalizado</div>
<div class="r" style="left:1987px;top:1166.08px;width:168px;height:34px;overflow:hidden;border-radius:9px 0 0 9px;background:#1ea4ca">
<div class="t" style="left:9.30px;top:8.62px;font-size:17.5px;line-height:17.5px;color:#fff;text-shadow:0.8px 0 0 #fff;letter-spacing:0.750px;">APTO CON RESTRICCIONES</div>
</div>
<div class="r" style="left:2651px;top:1162.58px;width:79px;height:40px;background:#e5a03e;border-radius:9px"></div>
<svg style="left:2682px;top:1175px" width="17" height="17" viewBox="0 0 17 17"><path d="M2.9 6 V2.4 a1.6 1.6 0 0 1 1.6 -1.6 H12.5 a1.6 1.6 0 0 1 1.6 1.6 V6" fill="none" stroke="#fff" stroke-width="1.9"/><rect x="0.2" y="5.8" width="16.6" height="6.2" rx="1.8" fill="#fff"/><rect x="3.1" y="9.6" width="10.8" height="6.6" fill="#fff"/><rect x="4.9" y="10.9" width="7.2" height="2.9" fill="#e5a03e"/></svg>
<div class="t" style="left:501.30px;top:1245.84px;font-size:22.5px;line-height:22.5px;color:#595959;letter-spacing:0.872px;">OA1-00022518</div>
<div class="t" style="left:726.50px;top:1245.84px;font-size:22.5px;line-height:22.5px;color:#595959;letter-spacing:-0.350px;transform:scaleX(0.9994);transform-origin:0 0;">OCUPACIONAL</div>
<div class="t" style="left:951.51px;top:1245.84px;font-size:22.5px;line-height:22.5px;color:#595959;letter-spacing:-0.350px;transform:scaleX(0.9948);transform-origin:0 0;">OPERATIVA</div>
<div class="t" style="left:1177.40px;top:1245.84px;font-size:22.5px;line-height:22.5px;color:#595959;letter-spacing:-0.350px;transform:scaleX(0.9731);transform-origin:0 0;">TECNICO 4 MRD</div>
<div class="t" style="left:1402.30px;top:1245.84px;font-size:22.5px;line-height:22.5px;color:#595959;letter-spacing:-0.350px;transform:scaleX(0.9448);transform-origin:0 0;">TECNICO</div>
<div class="r" style="left:1627px;top:1240.56px;width:119px;height:34px;background:#3ebd42;border-radius:9px"></div>
<div class="t" style="left:1636.30px;top:1249.19px;font-size:17.5px;line-height:17.5px;color:#fff;text-shadow:0.8px 0 0 #fff;letter-spacing:1.498px;">AUDITADO</div>
<div class="r" style="left:1807px;top:1240.56px;width:109px;height:34px;background:#1fb79d;border-radius:9px"></div>
<div class="t" style="left:1815.30px;top:1249.19px;font-size:17.5px;line-height:17.5px;color:#fff;text-shadow:0.8px 0 0 #fff;letter-spacing:1.307px;">Finalizado</div>
<div class="r" style="left:1987px;top:1240.56px;width:104px;height:34px;background:#f77333;border-radius:9px"></div>
<div class="t" style="left:1995.30px;top:1249.19px;font-size:17.5px;line-height:17.5px;color:#fff;text-shadow:0.8px 0 0 #fff;letter-spacing:1.262px;">NO APTO</div>
<div class="r" style="left:2651px;top:1237.06px;width:79px;height:40px;background:#e5a03e;border-radius:9px"></div>
<svg style="left:2682px;top:1249px" width="17" height="17" viewBox="0 0 17 17"><path d="M2.9 6 V2.4 a1.6 1.6 0 0 1 1.6 -1.6 H12.5 a1.6 1.6 0 0 1 1.6 1.6 V6" fill="none" stroke="#fff" stroke-width="1.9"/><rect x="0.2" y="5.8" width="16.6" height="6.2" rx="1.8" fill="#fff"/><rect x="3.1" y="9.6" width="10.8" height="6.6" fill="#fff"/><rect x="4.9" y="10.9" width="7.2" height="2.9" fill="#e5a03e"/></svg>
<div class="t" style="left:501.30px;top:1320.32px;font-size:22.5px;line-height:22.5px;color:#595959;letter-spacing:0.872px;">OA1-00022214</div>
<div class="t" style="left:726.50px;top:1320.32px;font-size:22.5px;line-height:22.5px;color:#595959;letter-spacing:-0.350px;transform:scaleX(0.9994);transform-origin:0 0;">OCUPACIONAL</div>
<div class="t" style="left:951.51px;top:1320.32px;font-size:22.5px;line-height:22.5px;color:#595959;letter-spacing:-0.350px;transform:scaleX(0.9948);transform-origin:0 0;">OPERATIVA</div>
<div class="t" style="left:1177.40px;top:1303.17px;font-size:22.5px;line-height:22.5px;color:#595959;letter-spacing:-0.350px;transform:scaleX(0.9736);transform-origin:0 0;">TECNICO HFC -</div>
<div class="t" style="left:1176.40px;top:1337.47px;font-size:22.5px;line-height:22.5px;color:#595959;letter-spacing:-0.277px;">FTTH</div>
<div class="t" style="left:1402.30px;top:1320.32px;font-size:22.5px;line-height:22.5px;color:#595959;letter-spacing:-0.350px;transform:scaleX(0.9448);transform-origin:0 0;">TECNICO</div>
<div class="r" style="left:1627px;top:1315.04px;width:119px;height:34px;background:#3ebd42;border-radius:9px"></div>
<div class="t" style="left:1636.30px;top:1323.67px;font-size:17.5px;line-height:17.5px;color:#fff;text-shadow:0.8px 0 0 #fff;letter-spacing:1.498px;">AUDITADO</div>
<div class="r" style="left:1807px;top:1315.04px;width:109px;height:34px;background:#1fb79d;border-radius:9px"></div>
<div class="t" style="left:1815.30px;top:1323.67px;font-size:17.5px;line-height:17.5px;color:#fff;text-shadow:0.8px 0 0 #fff;letter-spacing:1.307px;">Finalizado</div>
<div class="r" style="left:1987px;top:1315.04px;width:70px;height:34px;background:#1fb79d;border-radius:9px"></div>
<div class="t" style="left:1996.30px;top:1323.67px;font-size:17.5px;line-height:17.5px;color:#fff;text-shadow:0.8px 0 0 #fff;letter-spacing:1.127px;">APTO</div>
<div class="r" style="left:2651px;top:1311.54px;width:79px;height:40px;background:#e5a03e;border-radius:9px"></div>
<svg style="left:2682px;top:1324px" width="17" height="17" viewBox="0 0 17 17"><path d="M2.9 6 V2.4 a1.6 1.6 0 0 1 1.6 -1.6 H12.5 a1.6 1.6 0 0 1 1.6 1.6 V6" fill="none" stroke="#fff" stroke-width="1.9"/><rect x="0.2" y="5.8" width="16.6" height="6.2" rx="1.8" fill="#fff"/><rect x="3.1" y="9.6" width="10.8" height="6.6" fill="#fff"/><rect x="4.9" y="10.9" width="7.2" height="2.9" fill="#e5a03e"/></svg>
<div class="t" style="left:501.30px;top:1394.80px;font-size:22.5px;line-height:22.5px;color:#595959;letter-spacing:0.872px;">OA1-00022206</div>
<div class="t" style="left:726.50px;top:1394.80px;font-size:22.5px;line-height:22.5px;color:#595959;letter-spacing:-0.350px;transform:scaleX(0.9994);transform-origin:0 0;">OCUPACIONAL</div>
<div class="t" style="left:951.51px;top:1394.80px;font-size:22.5px;line-height:22.5px;color:#595959;letter-spacing:-0.350px;transform:scaleX(0.9948);transform-origin:0 0;">OPERATIVA</div>
<div class="t" style="left:1177.40px;top:1377.64px;font-size:22.5px;line-height:22.5px;color:#595959;letter-spacing:-0.350px;transform:scaleX(0.9736);transform-origin:0 0;">TECNICO HFC -</div>
<div class="t" style="left:1176.40px;top:1411.94px;font-size:22.5px;line-height:22.5px;color:#595959;letter-spacing:-0.277px;">FTTH</div>
<div class="t" style="left:1402.30px;top:1394.80px;font-size:22.5px;line-height:22.5px;color:#595959;letter-spacing:-0.350px;transform:scaleX(0.9448);transform-origin:0 0;">TECNICO</div>
<div class="r" style="left:1627px;top:1389.52px;width:119px;height:34px;background:#3ebd42;border-radius:9px"></div>
<div class="t" style="left:1636.30px;top:1398.14px;font-size:17.5px;line-height:17.5px;color:#fff;text-shadow:0.8px 0 0 #fff;letter-spacing:1.498px;">AUDITADO</div>
<div class="r" style="left:1807px;top:1389.52px;width:109px;height:34px;background:#1fb79d;border-radius:9px"></div>
<div class="t" style="left:1815.30px;top:1398.14px;font-size:17.5px;line-height:17.5px;color:#fff;text-shadow:0.8px 0 0 #fff;letter-spacing:1.307px;">Finalizado</div>
<div class="r" style="left:1987px;top:1389.52px;width:70px;height:34px;background:#1fb79d;border-radius:9px"></div>
<div class="t" style="left:1996.30px;top:1398.14px;font-size:17.5px;line-height:17.5px;color:#fff;text-shadow:0.8px 0 0 #fff;letter-spacing:1.127px;">APTO</div>
<div class="r" style="left:2651px;top:1386.02px;width:79px;height:40px;background:#e5a03e;border-radius:9px"></div>
<svg style="left:2682px;top:1398px" width="17" height="17" viewBox="0 0 17 17"><path d="M2.9 6 V2.4 a1.6 1.6 0 0 1 1.6 -1.6 H12.5 a1.6 1.6 0 0 1 1.6 1.6 V6" fill="none" stroke="#fff" stroke-width="1.9"/><rect x="0.2" y="5.8" width="16.6" height="6.2" rx="1.8" fill="#fff"/><rect x="3.1" y="9.6" width="10.8" height="6.6" fill="#fff"/><rect x="4.9" y="10.9" width="7.2" height="2.9" fill="#e5a03e"/></svg>
<div class="t" style="left:501.30px;top:1469.28px;font-size:22.5px;line-height:22.5px;color:#595959;letter-spacing:0.872px;">OA1-00022163</div>
<div class="t" style="left:726.50px;top:1469.28px;font-size:22.5px;line-height:22.5px;color:#595959;letter-spacing:-0.350px;transform:scaleX(0.9994);transform-origin:0 0;">OCUPACIONAL</div>
<div class="t" style="left:952.50px;top:1469.28px;font-size:22.5px;line-height:22.5px;color:#595959;letter-spacing:-0.202px;">ADMINISTRATIVA</div>
<div class="t" style="left:1177.40px;top:1452.12px;font-size:22.5px;line-height:22.5px;color:#595959;letter-spacing:-0.270px;">AUXILIAR</div>
<div class="t" style="left:1176.42px;top:1486.42px;font-size:22.5px;line-height:22.5px;color:#595959;letter-spacing:-0.350px;transform:scaleX(0.9752);transform-origin:0 0;">OPERATIVO</div>
<div class="t" style="left:1402.30px;top:1469.28px;font-size:22.5px;line-height:22.5px;color:#595959;letter-spacing:-0.330px;">ADMINISTRATIVO</div>
<div class="r" style="left:1627px;top:1464.00px;width:119px;height:34px;background:#3ebd42;border-radius:9px"></div>
<div class="t" style="left:1636.30px;top:1472.62px;font-size:17.5px;line-height:17.5px;color:#fff;text-shadow:0.8px 0 0 #fff;letter-spacing:1.498px;">AUDITADO</div>
<div class="r" style="left:1807px;top:1464.00px;width:109px;height:34px;background:#1fb79d;border-radius:9px"></div>
<div class="t" style="left:1815.30px;top:1472.62px;font-size:17.5px;line-height:17.5px;color:#fff;text-shadow:0.8px 0 0 #fff;letter-spacing:1.307px;">Finalizado</div>
<div class="r" style="left:1987px;top:1464.00px;width:70px;height:34px;background:#1fb79d;border-radius:9px"></div>
<div class="t" style="left:1996.30px;top:1472.62px;font-size:17.5px;line-height:17.5px;color:#fff;text-shadow:0.8px 0 0 #fff;letter-spacing:1.127px;">APTO</div>
<div class="r" style="left:2651px;top:1460.50px;width:79px;height:40px;background:#e5a03e;border-radius:9px"></div>
<svg style="left:2682px;top:1472px" width="17" height="17" viewBox="0 0 17 17"><path d="M2.9 6 V2.4 a1.6 1.6 0 0 1 1.6 -1.6 H12.5 a1.6 1.6 0 0 1 1.6 1.6 V6" fill="none" stroke="#fff" stroke-width="1.9"/><rect x="0.2" y="5.8" width="16.6" height="6.2" rx="1.8" fill="#fff"/><rect x="3.1" y="9.6" width="10.8" height="6.6" fill="#fff"/><rect x="4.9" y="10.9" width="7.2" height="2.9" fill="#e5a03e"/></svg>
<div class="t" style="left:501.30px;top:1543.76px;font-size:22.5px;line-height:22.5px;color:#595959;letter-spacing:0.872px;">OA1-00022140</div>
<div class="t" style="left:726.50px;top:1543.76px;font-size:22.5px;line-height:22.5px;color:#595959;letter-spacing:-0.350px;transform:scaleX(0.9994);transform-origin:0 0;">OCUPACIONAL</div>
<div class="t" style="left:951.51px;top:1543.76px;font-size:22.5px;line-height:22.5px;color:#595959;letter-spacing:-0.350px;transform:scaleX(0.9948);transform-origin:0 0;">OPERATIVA</div>
<div class="t" style="left:1176.45px;top:1526.61px;font-size:22.5px;line-height:22.5px;color:#595959;letter-spacing:-0.350px;transform:scaleX(0.9483);transform-origin:0 0;">MENSAJERO</div>
<div class="t" style="left:1176.42px;top:1560.90px;font-size:22.5px;line-height:22.5px;color:#595959;letter-spacing:-0.350px;transform:scaleX(0.9849);transform-origin:0 0;">MOTORIZADO</div>
<div class="t" style="left:1401.32px;top:1543.76px;font-size:22.5px;line-height:22.5px;color:#595959;letter-spacing:-0.350px;transform:scaleX(0.9752);transform-origin:0 0;">OPERATIVO</div>
<div class="r" style="left:1627px;top:1538.48px;width:119px;height:34px;background:#3ebd42;border-radius:9px"></div>
<div class="t" style="left:1636.30px;top:1547.11px;font-size:17.5px;line-height:17.5px;color:#fff;text-shadow:0.8px 0 0 #fff;letter-spacing:1.498px;">AUDITADO</div>
<div class="r" style="left:1807px;top:1538.48px;width:109px;height:34px;background:#1fb79d;border-radius:9px"></div>
<div class="t" style="left:1815.30px;top:1547.11px;font-size:17.5px;line-height:17.5px;color:#fff;text-shadow:0.8px 0 0 #fff;letter-spacing:1.307px;">Finalizado</div>
<div class="r" style="left:1987px;top:1538.48px;width:137px;height:34px;background:#e8a13e;border-radius:9px"></div>
<div class="t" style="left:1996.30px;top:1547.11px;font-size:17.5px;line-height:17.5px;color:#fff;text-shadow:0.8px 0 0 #fff;letter-spacing:1.108px;">OBSERVADO</div>
<div class="t" style="left:2175.60px;top:1539.53px;font-size:18px;line-height:18px;color:#111111;text-shadow:0.6px 0 0 #111111;letter-spacing:0.766px;">Por E78.2 (interc. Endocrinologia) DIS...</div>
<div class="r" style="left:2651px;top:1534.98px;width:79px;height:40px;background:#e5a03e;border-radius:9px"></div>
<svg style="left:2682px;top:1547px" width="17" height="17" viewBox="0 0 17 17"><path d="M2.9 6 V2.4 a1.6 1.6 0 0 1 1.6 -1.6 H12.5 a1.6 1.6 0 0 1 1.6 1.6 V6" fill="none" stroke="#fff" stroke-width="1.9"/><rect x="0.2" y="5.8" width="16.6" height="6.2" rx="1.8" fill="#fff"/><rect x="3.1" y="9.6" width="10.8" height="6.6" fill="#fff"/><rect x="4.9" y="10.9" width="7.2" height="2.9" fill="#e5a03e"/></svg>
<div class="r" style="left:980px;top:1582px;width:1278px;height:8px;background:rgba(0,0,0,0.022);border-radius:4px;"></div>
<div class="r" style="left:700px;top:375px;width:18px;height:1217px;background:linear-gradient(to right,rgba(0,0,0,0.075),rgba(0,0,0,0.025) 35%,rgba(0,0,0,0))"></div>
<div class="r" style="left:2620px;top:375px;width:18px;height:1217px;background:linear-gradient(to left,rgba(0,0,0,0.045),rgba(0,0,0,0.015) 35%,rgba(0,0,0,0))"></div>
<div class="r" style="left:2638px;top:375px;width:1px;height:1217px;background:#efefef;"></div>
<div class="t" style="left:2650.00px;top:397.80px;font-size:22px;line-height:22px;color:#8b8d93;text-shadow:0.5px 0 0 #8b8d93;letter-spacing:0.500px;">Documentos</div>
<div class="r" style="left:2614px;top:954px;width:153px;height:44px;background:#333333;border-radius:6px;"></div>
<svg style="left:2680px;top:997px" width="22" height="12" viewBox="0 0 22 12"><path d="M0 0 H22 L12.6 10.6 a2.2 2.2 0 0 1 -3.2 0 Z" fill="#333333"/></svg>
<div class="t" style="left:2626.70px;top:963.70px;font-size:22px;line-height:22px;color:#fff;text-shadow:0.3px 0 0 #fff;letter-spacing:0.277px;">Documentos</div>
<div class="r" style="left:490px;top:1617px;width:48px;height:48px;background:#f5f6f8;border-radius:6px;"></div>
<svg style="left:507px;top:1633px" width="14" height="18" viewBox="0 0 14 18"><path d="M9.5 3.5 L4.5 9 L9.5 14.5" fill="none" stroke="#bbbbbb" stroke-width="1.5"/></svg>
<div class="r" style="left:550px;top:1617px;width:48px;height:48px;background:#1ea4ca;border-radius:6px;"></div>
<div class="t" style="left:550px;width:48px;text-align:center;top:1630.8px;font-size:22px;line-height:22px;color:#fff;font-weight:700;">1</div>
<div class="r" style="left:610px;top:1617px;width:48px;height:48px;background:#eff0f3;border-radius:6px;"></div>
<div class="t" style="left:610px;width:48px;text-align:center;top:1630.8px;font-size:22px;line-height:22px;color:#262626;">2</div>
<div class="r" style="left:670px;top:1617px;width:48px;height:48px;background:#eff0f3;border-radius:6px;"></div>
<div class="t" style="left:670px;width:48px;text-align:center;top:1630.8px;font-size:22px;line-height:22px;color:#262626;">3</div>
<div class="r" style="left:730px;top:1617px;width:48px;height:48px;background:#eff0f3;border-radius:6px;"></div>
<div class="t" style="left:730px;width:48px;text-align:center;top:1630.8px;font-size:22px;line-height:22px;color:#262626;">4</div>
<div class="r" style="left:790px;top:1617px;width:48px;height:48px;background:#eff0f3;border-radius:6px;"></div>
<div class="t" style="left:790px;width:48px;text-align:center;top:1630.8px;font-size:22px;line-height:22px;color:#262626;">5</div>
<div class="r" style="left:850px;top:1617px;width:48px;height:48px;background:#eff0f3;border-radius:6px;"></div>
<div class="t" style="left:850px;width:48px;text-align:center;top:1630.8px;font-size:22px;line-height:22px;color:#262626;">6</div>
<div class="r" style="left:910px;top:1617px;width:48px;height:48px;background:#eff0f3;border-radius:6px;"></div>
<svg style="left:923px;top:1637px" width="22" height="8" viewBox="0 0 22 8"><circle cx="4.5" cy="4" r="2.4" fill="#333"/><circle cx="11" cy="4" r="2.4" fill="#333"/><circle cx="17.5" cy="4" r="2.4" fill="#333"/></svg>
<div class="r" style="left:970px;top:1617px;width:48px;height:48px;background:#eff0f3;border-radius:6px;"></div>
<div class="t" style="left:970px;width:48px;text-align:center;top:1630.8px;font-size:22px;line-height:22px;color:#262626;">10</div>
<div class="r" style="left:1030px;top:1617px;width:48px;height:48px;background:#f5f6f8;border-radius:6px;"></div>
<svg style="left:1047px;top:1633px" width="14" height="18" viewBox="0 0 14 18"><path d="M4.5 3.5 L9.5 9 L4.5 14.5" fill="none" stroke="#444" stroke-width="1.5"/></svg>
<div class="r" style="left:0px;top:1740px;width:2880px;height:33px;overflow:hidden">
<div class="t" style="left:479.80px;top:16.75px;font-size:21px;line-height:21px;color:#4b4c5a;text-shadow:0.8px 0 0 #4b4c5a;letter-spacing:1.028px;">Copyright © 2026 SofSalud360 . Todos los derechos reservados.</div>
<div class="t" style="left:2631.20px;top:16.75px;font-size:21px;line-height:21px;color:#4b4c5a;text-shadow:0.8px 0 0 #4b4c5a;letter-spacing:0.878px;">Soporte en línea</div>
<svg style="left:2807px;top:17px" width="19" height="19" viewBox="0 0 19 19"><path d="M2.6 16.6 L3.6 13 A7.6 7.6 0 1 1 6.2 15.6 Z" fill="none" stroke="#4b4c5a" stroke-width="1.8" stroke-linejoin="round"/><path d="M6.6 6.2 q0.3 -1 1 -0.6 l1 1.3 q0.2 0.5 -0.3 1 q0.9 1.9 2.8 2.8 q0.5 -0.5 1 -0.3 l1.3 1 q0.4 0.7 -0.6 1 q-3.3 0.3 -6.2 -6.2 Z" fill="#4b4c5a"/></svg>
</div>
</div></body></html>
